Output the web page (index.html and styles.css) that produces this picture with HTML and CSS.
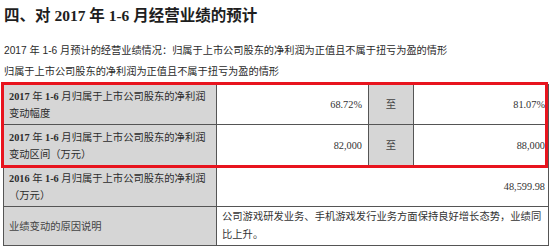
FILE: index.html
```html
<!DOCTYPE html>
<html lang="zh-CN">
<head>
<meta charset="utf-8">
<link rel="stylesheet" href="styles.css">
</head>
<body>
<h1 class="title">四、对 <span class="num">2017</span> 年 <span class="num">1-6</span> 月经营业绩的预计</h1>
<p class="line line-first">2017 年 1-6 月预计的经营业绩情况：归属于上市公司股东的净利润为正值且不属于扭亏为盈的情形</p>
<p class="line">归属于上市公司股东的净利润为正值且不属于扭亏为盈的情形</p>
<div class="table-wrap">
  <table class="grid">
    <colgroup>
      <col class="c1"><col class="c2"><col class="c3"><col class="c4">
    </colgroup>
    <tr class="r1">
      <td class="label"><span class="num">2017</span> 年 <span class="num">1-6</span> 月归属于上市公司股东的净利润<br>变动幅度</td>
      <td class="val">68.72%</td>
      <td class="to">至</td>
      <td class="val end">81.07%</td>
    </tr>
    <tr class="r2">
      <td class="label"><span class="num">2017</span> 年 <span class="num">1-6</span> 月归属于上市公司股东的净利润<br>变动区间（万元）</td>
      <td class="val">82,000</td>
      <td class="to">至</td>
      <td class="val end">88,000</td>
    </tr>
    <tr class="r3">
      <td class="label"><span class="num">2016</span> 年 <span class="num">1-6</span> 月归属于上市公司股东的净利润<br>（万元）</td>
      <td class="val end" colspan="3">48,599.98</td>
    </tr>
    <tr class="r4">
      <td class="label light">业绩变动的原因说明</td>
      <td class="text" colspan="3">公司游戏研发业务、手机游戏发行业务方面保持良好增长态势，业绩同<br>比上升。</td>
    </tr>
  </table>
  <div class="highlight"></div>
</div>
</body>
</html>
```
FILE: styles.css
```css
html, body {
  margin: 0;
  padding: 0;
  background: #ffffff;
}
body {
  width: 550px;
  height: 247px;
  overflow: hidden;
  font-family: "Liberation Serif", "Noto Sans CJK SC", serif;
  color: #333;
}
.title {
  margin: 0;
  padding: 7px 0 0 4px;
  font-size: 15.5px;
  line-height: 18px;
  font-weight: bold;
  color: #1e1e1e;
  font-family: "Liberation Serif", "Noto Sans CJK SC", serif;
}
.title .num {
  font-family: "Liberation Serif", serif;
}
.line {
  margin: 0;
  padding-left: 4px;
  font-family: "Liberation Sans", "Noto Sans CJK SC", sans-serif;
  font-size: 10.2px;
  line-height: 21px;
  color: #2a2a2a;
}
.line-first {
  margin-top: 15px;
}
.table-wrap {
  position: relative;
  margin: 0 0 0 3px;
  padding-top: 2px;
  width: 545px;
}
.grid {
  border-collapse: collapse;
  table-layout: fixed;
  width: 545px;
  font-size: 10.3px;
  line-height: 17px;
}
.c1 { width: 213px; }
.c2 { width: 152px; }
.c3 { width: 45px; }
.c4 { width: 135px; }
.grid td {
  border: 1px solid #555;
  padding: 0;
  vertical-align: middle;
}
.label {
  background: #d6d6d6;
  padding: 2px 4px 2px 5px !important;
  color: #2b2b2b;
  font-family: "Liberation Serif", "Noto Sans CJK SC", serif;
}
.label .num {
  font-weight: bold;
}
.label.light {
  color: #444;
}
.r1 td { height: 35px; }
.r2 td { height: 37px; }
.r3 td { height: 35px; }
.r4 td { height: 34px; }
.val {
  text-align: right;
  padding-right: 6px !important;
  color: #333;
}
.val.end {
  padding-right: 3px !important;
}
.to {
  background: #d6d6d6;
  text-align: center;
  color: #444;
}
.text {
  padding: 0 4px 0 5px !important;
  line-height: 18px;
  color: #333;
}
.highlight {
  position: absolute;
  left: -2px;
  top: 0;
  width: 541px;
  height: 80px;
  border: 3px solid #e8141e;
  pointer-events: none;
}
```
